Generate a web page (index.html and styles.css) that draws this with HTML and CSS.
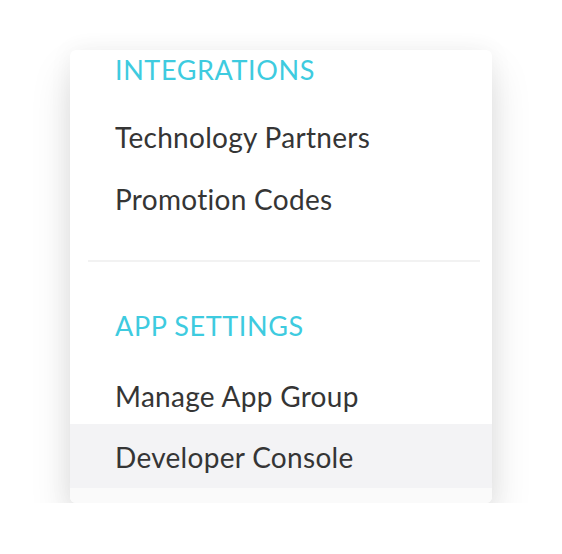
FILE: index.html
```html
<!DOCTYPE html>
<html>
<head>
<meta charset="utf-8">
<link rel="stylesheet" href="styles.css">
</head>
<body>
<div class="menu">
  <div class="section-title first">INTEGRATIONS</div>
  <div class="item item-first">Technology Partners</div>
  <div class="item">Promotion Codes</div>
  <div class="divider"></div>
  <div class="section-title second">APP SETTINGS</div>
  <div class="item item-first short">Manage App Group</div>
  <div class="item hover">Developer Console</div>
  <div class="footer"></div>
</div>
</body>
</html>
```
FILE: styles.css
```css
html, body {
  margin: 0;
  padding: 0;
  background: #ffffff;
}
body {
  font-family: "Lato", "Liberation Sans", sans-serif;
  font-variant-ligatures: none;
  padding: 50px 0 0 70px;
}
.menu {
  width: 422px;
  height: 453px;
  background: #ffffff;
  border-radius: 6px;
  overflow: hidden;
  display: flex;
  flex-direction: column;
  box-shadow: 0 22px 40px rgba(0, 0, 0, 0.13), 0 0 24px rgba(0, 0, 0, 0.05);
}
.section-title {
  font-size: 27px;
  line-height: 40px;
  color: #3ecbdf;
  padding-left: 45px;
  letter-spacing: 0.6px;
}
.section-title.second {
  margin-top: 44px;
}
.item {
  height: 62px;
  line-height: 62px;
  font-size: 28px;
  color: #353535;
  padding-left: 45px;
  letter-spacing: 0.3px;
  flex-shrink: 0;
}
.item-first {
  margin-top: 16px;
}
.item-first.short {
  margin-top: 19px;
  height: 59px;
}
.item.hover {
  height: 64px;
  line-height: 62px;
  padding-top: 2px;
  box-sizing: border-box;
  background: #f3f3f5;
}
.divider {
  height: 2px;
  margin: 30px 12px 0 18px;
  background: #f2f2f2;
  flex-shrink: 0;
}
.footer {
  flex: 1;
  background: #fafafa;
}
```
